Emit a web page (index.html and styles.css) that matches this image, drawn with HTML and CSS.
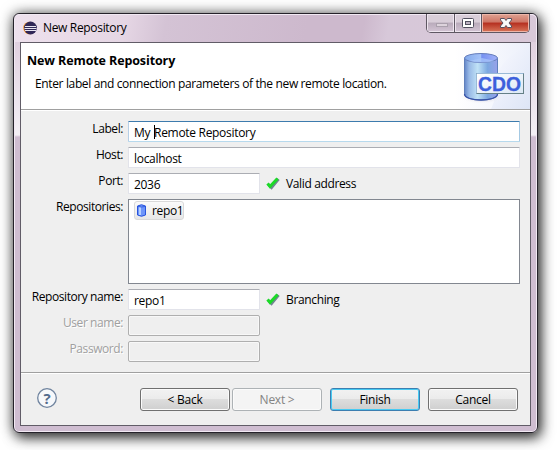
FILE: index.html
```html
<!DOCTYPE html>
<html lang="en">
<head>
<meta charset="utf-8">
<title>New Repository</title>
<link rel="stylesheet" href="styles.css">
</head>
<body>
<main class="window">
  <header class="titlebar">
    <svg class="app-icon" width="14" height="14" viewBox="0 0 14 14"><circle cx="6.5" cy="7" r="6.3" fill="#f39a32"/><circle cx="7.5" cy="7" r="6.4" fill="#302757"/><path d="M2 5.500h11M1.500 7.500h12M2 9.500h11" stroke="#e8e5f1" stroke-width="1"/></svg>
    <h1 class="title">New Repository</h1>
    <div class="controls">
      <span class="control minimize"><svg width="28" height="19"><rect x="9.5" y="9.5" width="11" height="3" fill="#ddd3dc" stroke="#aaa0ac"/></svg></span>
      <span class="control maximize"><svg width="27" height="19"><rect x="7.5" y="4.500" width="11" height="9" rx="1" fill="#fff" stroke="#51505f"/><rect x="10.500" y="7.500" width="5" height="3" fill="#bcb2c2" stroke="#51505f"/></svg></span>
      <span class="control close"><svg width="47" height="19"><path d="M18.500 4.500h4l1.500 2 1.500-2h4v1.500L27 9l2.500 3v1.500h-4L24 11.500l-1.500 2h-4V12L21 9l-2.500-3z" fill="#fafafa" stroke="#59515f"/></svg></span>
    </div>
  </header>
  <section class="content">
    <div class="banner">
      <div class="banner-text">
        <h2>New Remote Repository</h2>
        <p>Enter label and connection parameters of the new remote location.</p>
      </div>
      <svg class="banner-art" width="75" height="66" viewBox="0 0 75 66">
        <defs>
          <linearGradient id="body"><stop offset="0" stop-color="#6285c8"/><stop offset=".14" stop-color="#98b9e6"/><stop offset=".4" stop-color="#c0e2f6"/><stop offset=".7" stop-color="#7ca8e0"/><stop offset="1" stop-color="#98a1ea"/></linearGradient>
          <linearGradient id="lid"><stop offset="0" stop-color="#83abec"/><stop offset=".5" stop-color="#a5c2f8"/><stop offset=".52" stop-color="#7590f1"/><stop offset="1" stop-color="#a2b2f9"/></linearGradient>
          <linearGradient id="sky" x2="1" y2="1"><stop offset="0" stop-color="#fafaff"/><stop offset="1" stop-color="#dde5f6"/></linearGradient>
          <linearGradient id="haze"><stop offset="0" stop-color="#fff"/><stop offset="1" stop-color="#ecf0fb"/></linearGradient>
          <radialGradient id="ground"><stop offset="0" stop-color="#a39bb5"/><stop offset="1" stop-color="#fff" stop-opacity="0"/></radialGradient>
          <linearGradient id="tag" x2="1" y2="1"><stop offset="0" stop-color="#fff"/><stop offset="1" stop-color="#dce8f5"/></linearGradient>
        </defs>
        <path d="M0 0H75V66H0z" fill="url(#haze)"/>
        <path d="M36 66Q42 54 44 27Q54 10 75 2V66z" fill="url(#sky)"/>
        <ellipse cx="27" cy="54" rx="22" ry="7" fill="url(#ground)"/>
        <path d="M9.500 15v36c0 8 33 8 33 0V15z" fill="url(#body)" stroke="#6080bb"/>
        <path d="M9.500 51c0 8 33 8 33 0" fill="none" stroke="#3853a8" stroke-width="1.300"/>
        <ellipse cx="26" cy="15" rx="16.500" ry="4.500" fill="url(#lid)" stroke="#667dbb"/>
        <path d="M14 18l13-3 13 3q-13 3-26 0" fill="#a9c8fa" opacity=".7"/>
        <rect x="21.500" y="30.500" width="47" height="20" fill="url(#tag)" stroke="#658087"/>
        <path d="M21.500 50.500v-20h47" fill="none" stroke="#99b9d6"/>
        <text x="23" y="47.500" textLength="43" lengthAdjust="spacingAndGlyphs" class="tag-text">CDO</text>
      </svg>
    </div>
    <form class="fields">
      <label>Label:</label><div class="field focused">My <i class="caret"></i>Remote Repository</div>
      <label>Host:</label><div class="field">localhost</div>
      <label>Port:</label><div class="row"><div class="field short">2036</div><svg class="check" width="14" height="13"><path d="M2.500 7.500L5.500 10.500L12.500 2" fill="none" stroke="#6f8590" stroke-width="3"/><path d="M1.500 6.500L4 9.500L11.500 1.500" fill="none" stroke="#1bda27" stroke-width="3"/></svg><span class="status">Valid address</span></div>
      <label>Repositories:</label><div class="list"><div class="item"><svg width="9" height="13"><path d="M.5 2Q4.500-.5 8.500 2v9Q4.500 13.500.5 11z" fill="#6e95fa" stroke="#2854dc"/><path d="M3 3v8" stroke="#b5d0ff" stroke-width="2"/><path d="M1 2.500q3.500 1 7 0" stroke="#355fe0" fill="none"/></svg><span>repo1</span></div></div>
      <label>Repository name:</label><div class="row"><div class="field short">repo1</div><svg class="check" width="14" height="13"><path d="M2.500 7.500L5.500 10.500L12.500 2" fill="none" stroke="#6f8590" stroke-width="3"/><path d="M1.500 6.500L4 9.500L11.500 1.500" fill="none" stroke="#1bda27" stroke-width="3"/></svg><span class="status">Branching</span></div>
      <label class="muted">User name:</label><div class="field short disabled"></div>
      <label class="muted">Password:</label><div class="field short disabled"></div>
    </form>
    <footer class="footer">
      <svg class="help" width="20" height="20"><circle cx="10" cy="10" r="9.300" fill="#f6f8fb" stroke="#70849f" stroke-width="1.300"/><text x="10" y="15.500" text-anchor="middle">?</text></svg>
      <button class="back">&lt; Back</button><button class="next" disabled>Next &gt;</button><button class="finish">Finish</button><button class="cancel">Cancel</button>
    </footer>
  </section>
</main>
</body>
</html>
```
FILE: styles.css
```css
* { box-sizing: border-box; }
body { margin: 0; padding: 13px; height: 450px; overflow: hidden; background: #fff; color: #000; font: 12px/16px "Open Sans", sans-serif; letter-spacing: -.36px; }
h1, h2, p { margin: 0; }
svg { flex: none; }
.window { width: 525px; height: 420px; padding: 0 6px 6px; border: 1px solid #25222a; border-radius: 6px; background: linear-gradient(#d7c6d7 0, #e2d3e1 35px, #f4f0f5 121px, #cfbdd1 123px, #cfbdd1); box-shadow: inset 0 0 0 1px #f2e9f3, 0 0 13px rgba(0,0,0,.5), 3px 5px 13px rgba(0,0,0,.7); }
.titlebar { height: 28px; margin: 0 -5px; padding-left: 8px; display: flex; align-items: flex-start; background: linear-gradient(100deg, #eee1ed 0, #e5d6e4 110px, #d4c3d5 150px, #cdb9cd 290px, #cdb9cd 345px, #d7c8d9 370px, #d8c8d8); border-top: 1px solid #f2e9f3; border-radius: 5px 5px 0 0; }
.app-icon { margin-top: 6px; }
.title { flex: 1; margin: 5px 0 0 6px; font: inherit; letter-spacing: -.33px; }
.controls { display: flex; height: 19px; margin: -1px 6px 0 0; border: solid #5f5863; border-width: 0 1px 1px; border-radius: 0 0 5px 5px; overflow: hidden; }
.control { width: 28px; border-right: 1px solid #5f5863; box-shadow: inset 0 0 0 1px #eee5ef; background: linear-gradient(#d9ced9 0 45%, #b9abbb 50%, #d4c5d5); }
.control svg { display: block; }
.maximize { width: 27px; }
.close { width: 47px; border: 0; background: linear-gradient(#dfa293, #ce7565 45%, #b52f20 50%, #d8765a); box-shadow: inset 0 0 0 1px #edb6a9; }
.content { width: 511px; height: 384px; border: 1px solid #615c67; background: #efefef; }
.banner { display: flex; justify-content: space-between; height: 67px; background: #fff; border-bottom: 1px solid #a0a0a0; }
.banner-text { padding: 9px 0 0 6px; }
h2 { font-size: 12.5px; line-height: 17px; font-weight: 700; letter-spacing: -.11px; }
.banner-text p { margin: 7px 0 0 8px; white-space: nowrap; }
.tag-text { font: bold 21px "Liberation Sans", sans-serif; fill: #3d60dc; stroke: #3d60dc; stroke-width: .3px; letter-spacing: 0; }
.fields { height: 263px; padding: 10px 10px 0 0; display: grid; grid-template-columns: 102px 392px; column-gap: 5px; row-gap: 5px; align-content: start; border-top: 1px solid #fff; border-bottom: 1px solid #a0a0a0; }
label { text-align: right; white-space: nowrap; letter-spacing: -.42px; }
.field { height: 21px; padding: 2px 5px; border: 1px solid #e2e3ea; border-top-color: #abadb3; border-radius: 1px; background: #fff; line-height: 17px; letter-spacing: -.3px; }
.focused { border-color: #3d7bad #a4c9e3 #b7d9ed #b5cfe7; }
.caret { display: inline-block; width: 1px; height: 14px; margin: 0 -1px 0 1px; vertical-align: -2px; background: #000; }
.short { width: 132px; }
.row { display: flex; }
.check { margin: 4px 0 0 6px; }
.status { margin: 3px 0 0 6px; }
.list { height: 85px; padding: 1px 5px; border: 1px solid #828790; background: #fff; }
.item { width: 50px; height: 19px; display: flex; align-items: center; gap: 6px; padding: 0 0 0 2px; border: 1px solid #d9d9d9; border-radius: 3px; background: linear-gradient(#fafafa, #e7e7e7); }
.muted { color: #a0a0a0; text-shadow: 1px 1px #fff; }
.disabled { background: #efefef; border-color: #afafaf; border-radius: 2px; box-shadow: inset 0 0 0 1px #f8f8f8; }
.footer { display: flex; align-items: flex-start; height: 52px; padding: 14px 0 0 16px; border-top: 1px solid #fff; }
.help text { font: bold 15px "Open Sans", sans-serif; fill: #536b8c; }
button { width: 90px; height: 23px; padding: 0; border: 1px solid #707070; border-radius: 3px; background: linear-gradient(#f2f2f2, #ebebeb 49%, #ddd 50%, #cfcfcf); box-shadow: inset 0 0 0 1px #fbfbfb; color: #000; font: inherit; letter-spacing: -.25px; }
.back { margin-left: 83px; }
.next { margin-left: 2px; border-color: #adb2b5; background: #f4f4f4; color: #838383; }
.finish, .cancel { margin-left: 8px; }
.finish { border-color: #3c7fb1; box-shadow: inset 0 0 0 1px #48caf2; }
```
